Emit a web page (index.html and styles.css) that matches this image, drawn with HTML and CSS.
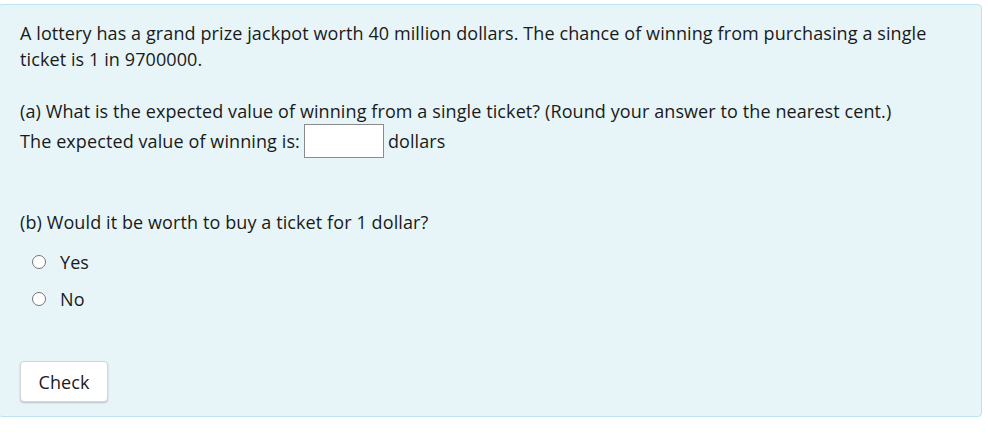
FILE: index.html
```html
<!DOCTYPE html>
<html>
<head>
<meta charset="utf-8">
<link rel="stylesheet" href="styles.css">
</head>
<body>
<div class="card">
  <p class="intro">A lottery has a grand prize jackpot worth 40 million dollars. The chance of winning from purchasing a single ticket is 1 in 9700000.</p>
  <p class="part-a">(a) What is the expected value of winning from a single ticket? (Round your answer to the nearest cent.)</p>
  <div class="answer-line">The expected value of winning is: <input class="answer" type="text"> dollars</div>
  <p class="part-b">(b) Would it be worth to buy a ticket for 1 dollar?</p>
  <div class="options">
    <label class="option"><span class="radio"></span>Yes</label>
    <label class="option"><span class="radio"></span>No</label>
  </div>
  <button class="check">Check</button>
</div>
</body>
</html>
```
FILE: styles.css
```css
html, body {
  margin: 0;
  padding: 0;
  background: #ffffff;
}
body {
  font-family: "Open Sans", "Noto Sans", sans-serif;
  font-size: 18px;
  letter-spacing: 0.1px;
  color: #1a1a1a;
}
.card {
  margin: 4px 0 0 -2px;
  width: 984px;
  height: 413px;
  box-sizing: border-box;
  background: #e7f5f8;
  border: 1px solid #bde3ee;
  border-radius: 4px;
  padding: 15px 20px 0 21px;
  display: flex;
  flex-direction: column;
  align-items: flex-start;
}
p {
  margin: 0;
}
.intro {
  line-height: 26px;
  width: 920px;
}
.part-a {
  margin-top: 26px;
  line-height: 26px;
}
.answer-line {
  display: flex;
  align-items: center;
  gap: 4px;
  height: 34px;
  margin-top: 0;
}
.answer {
  width: 80px;
  height: 34px;
  box-sizing: border-box;
  border: 1px solid #8a8a8a;
  background: #fff;
  margin: 0;
  padding: 0;
}
.part-b {
  margin-top: 51px;
  line-height: 26px;
}
.options {
  display: flex;
  flex-direction: column;
  gap: 11px;
  margin-top: 14px;
  padding-left: 12px;
}
.option {
  display: flex;
  align-items: center;
  gap: 14px;
  line-height: 26px;
}
.radio {
  width: 14px;
  height: 14px;
  box-sizing: border-box;
  border: 1px solid #767676;
  border-radius: 50%;
  background: #fff;
}
.check {
  margin-top: 49px;
  width: 88px;
  height: 41px;
  font-family: inherit;
  font-size: 18px;
  letter-spacing: 0.1px;
  color: #1a1a1a;
  background: #fff;
  border: 1px solid #d6d6d6;
  border-radius: 4px;
  box-shadow: 0 1px 2px rgba(0,0,0,0.2);
}
```
